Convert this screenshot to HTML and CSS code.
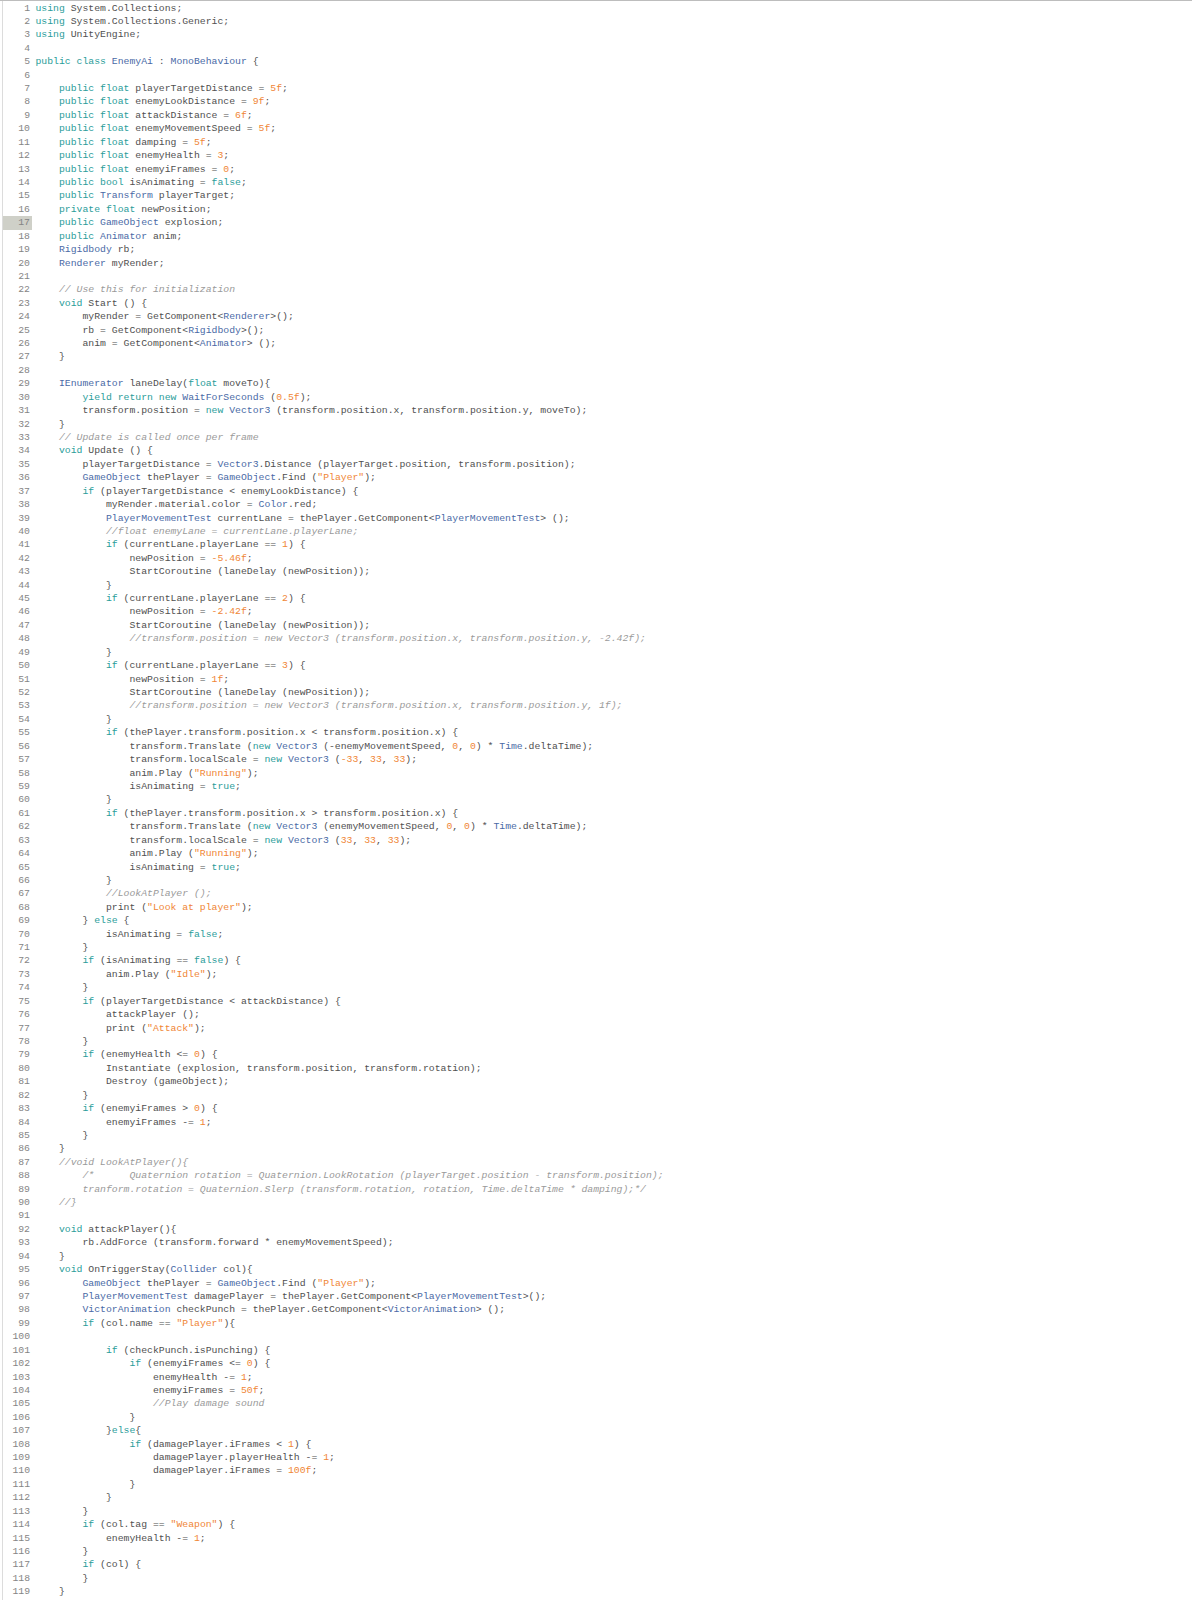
FILE: index.html
```html
<!DOCTYPE html>
<html lang="en">
<head>
<meta charset="utf-8">
<title>EnemyAi.cs</title>
<link rel="stylesheet" href="styles.css">
</head>
<body>
<main class="editor">
<div class="line"><span class="num">1</span><code><span class="k">using</span> System.Collections;</code></div>
<div class="line"><span class="num">2</span><code><span class="k">using</span> System.Collections.Generic;</code></div>
<div class="line"><span class="num">3</span><code><span class="k">using</span> UnityEngine;</code></div>
<div class="line"><span class="num">4</span><code></code></div>
<div class="line"><span class="num">5</span><code><span class="k">public class</span> <span class="t">EnemyAi</span> : <span class="t">MonoBehaviour</span> {</code></div>
<div class="line"><span class="num">6</span><code></code></div>
<div class="line"><span class="num">7</span><code>    <span class="k">public float</span> playerTargetDistance = <span class="n">5f</span>;</code></div>
<div class="line"><span class="num">8</span><code>    <span class="k">public float</span> enemyLookDistance = <span class="n">9f</span>;</code></div>
<div class="line"><span class="num">9</span><code>    <span class="k">public float</span> attackDistance = <span class="n">6f</span>;</code></div>
<div class="line"><span class="num">10</span><code>    <span class="k">public float</span> enemyMovementSpeed = <span class="n">5f</span>;</code></div>
<div class="line"><span class="num">11</span><code>    <span class="k">public float</span> damping = <span class="n">5f</span>;</code></div>
<div class="line"><span class="num">12</span><code>    <span class="k">public float</span> enemyHealth = <span class="n">3</span>;</code></div>
<div class="line"><span class="num">13</span><code>    <span class="k">public float</span> enemyiFrames = <span class="n">0</span>;</code></div>
<div class="line"><span class="num">14</span><code>    <span class="k">public bool</span> isAnimating = <span class="k">false</span>;</code></div>
<div class="line"><span class="num">15</span><code>    <span class="k">public</span> <span class="t">Transform</span> playerTarget;</code></div>
<div class="line"><span class="num">16</span><code>    <span class="k">private float</span> newPosition;</code></div>
<div class="line current"><span class="num">17</span><code>    <span class="k">public</span> <span class="t">GameObject</span> explosion;</code></div>
<div class="line"><span class="num">18</span><code>    <span class="k">public</span> <span class="t">Animator</span> anim;</code></div>
<div class="line"><span class="num">19</span><code>    <span class="t">Rigidbody</span> rb;</code></div>
<div class="line"><span class="num">20</span><code>    <span class="t">Renderer</span> myRender;</code></div>
<div class="line"><span class="num">21</span><code></code></div>
<div class="line"><span class="num">22</span><code>    <span class="c">// Use this for initialization</span></code></div>
<div class="line"><span class="num">23</span><code>    <span class="k">void</span> Start () {</code></div>
<div class="line"><span class="num">24</span><code>        myRender = GetComponent&lt;<span class="t">Renderer</span>&gt;();</code></div>
<div class="line"><span class="num">25</span><code>        rb = GetComponent&lt;<span class="t">Rigidbody</span>&gt;();</code></div>
<div class="line"><span class="num">26</span><code>        anim = GetComponent&lt;<span class="t">Animator</span>&gt; ();</code></div>
<div class="line"><span class="num">27</span><code>    }</code></div>
<div class="line"><span class="num">28</span><code></code></div>
<div class="line"><span class="num">29</span><code>    <span class="t">IEnumerator</span> laneDelay(<span class="k">float</span> moveTo){</code></div>
<div class="line"><span class="num">30</span><code>        <span class="k">yield return new</span> <span class="t">WaitForSeconds</span> (<span class="n">0.5f</span>);</code></div>
<div class="line"><span class="num">31</span><code>        transform.position = <span class="k">new</span> <span class="t">Vector3</span> (transform.position.x, transform.position.y, moveTo);</code></div>
<div class="line"><span class="num">32</span><code>    }</code></div>
<div class="line"><span class="num">33</span><code>    <span class="c">// Update is called once per frame</span></code></div>
<div class="line"><span class="num">34</span><code>    <span class="k">void</span> Update () {</code></div>
<div class="line"><span class="num">35</span><code>        playerTargetDistance = <span class="t">Vector3</span>.Distance (playerTarget.position, transform.position);</code></div>
<div class="line"><span class="num">36</span><code>        <span class="t">GameObject</span> thePlayer = <span class="t">GameObject</span>.Find (<span class="n">"Player"</span>);</code></div>
<div class="line"><span class="num">37</span><code>        <span class="k">if</span> (playerTargetDistance &lt; enemyLookDistance) {</code></div>
<div class="line"><span class="num">38</span><code>            myRender.material.color = <span class="t">Color</span>.red;</code></div>
<div class="line"><span class="num">39</span><code>            <span class="t">PlayerMovementTest</span> currentLane = thePlayer.GetComponent&lt;<span class="t">PlayerMovementTest</span>&gt; ();</code></div>
<div class="line"><span class="num">40</span><code>            <span class="c">//float enemyLane = currentLane.playerLane;</span></code></div>
<div class="line"><span class="num">41</span><code>            <span class="k">if</span> (currentLane.playerLane == <span class="n">1</span>) {</code></div>
<div class="line"><span class="num">42</span><code>                newPosition = <span class="n">-5.46f</span>;</code></div>
<div class="line"><span class="num">43</span><code>                StartCoroutine (laneDelay (newPosition));</code></div>
<div class="line"><span class="num">44</span><code>            }</code></div>
<div class="line"><span class="num">45</span><code>            <span class="k">if</span> (currentLane.playerLane == <span class="n">2</span>) {</code></div>
<div class="line"><span class="num">46</span><code>                newPosition = <span class="n">-2.42f</span>;</code></div>
<div class="line"><span class="num">47</span><code>                StartCoroutine (laneDelay (newPosition));</code></div>
<div class="line"><span class="num">48</span><code>                <span class="c">//transform.position = new Vector3 (transform.position.x, transform.position.y, -2.42f);</span></code></div>
<div class="line"><span class="num">49</span><code>            }</code></div>
<div class="line"><span class="num">50</span><code>            <span class="k">if</span> (currentLane.playerLane == <span class="n">3</span>) {</code></div>
<div class="line"><span class="num">51</span><code>                newPosition = <span class="n">1f</span>;</code></div>
<div class="line"><span class="num">52</span><code>                StartCoroutine (laneDelay (newPosition));</code></div>
<div class="line"><span class="num">53</span><code>                <span class="c">//transform.position = new Vector3 (transform.position.x, transform.position.y, 1f);</span></code></div>
<div class="line"><span class="num">54</span><code>            }</code></div>
<div class="line"><span class="num">55</span><code>            <span class="k">if</span> (thePlayer.transform.position.x &lt; transform.position.x) {</code></div>
<div class="line"><span class="num">56</span><code>                transform.Translate (<span class="k">new</span> <span class="t">Vector3</span> (-enemyMovementSpeed, <span class="n">0</span>, <span class="n">0</span>) * <span class="t">Time</span>.deltaTime);</code></div>
<div class="line"><span class="num">57</span><code>                transform.localScale = <span class="k">new</span> <span class="t">Vector3</span> (<span class="n">-33</span>, <span class="n">33</span>, <span class="n">33</span>);</code></div>
<div class="line"><span class="num">58</span><code>                anim.Play (<span class="n">"Running"</span>);</code></div>
<div class="line"><span class="num">59</span><code>                isAnimating = <span class="k">true</span>;</code></div>
<div class="line"><span class="num">60</span><code>            }</code></div>
<div class="line"><span class="num">61</span><code>            <span class="k">if</span> (thePlayer.transform.position.x &gt; transform.position.x) {</code></div>
<div class="line"><span class="num">62</span><code>                transform.Translate (<span class="k">new</span> <span class="t">Vector3</span> (enemyMovementSpeed, <span class="n">0</span>, <span class="n">0</span>) * <span class="t">Time</span>.deltaTime);</code></div>
<div class="line"><span class="num">63</span><code>                transform.localScale = <span class="k">new</span> <span class="t">Vector3</span> (<span class="n">33</span>, <span class="n">33</span>, <span class="n">33</span>);</code></div>
<div class="line"><span class="num">64</span><code>                anim.Play (<span class="n">"Running"</span>);</code></div>
<div class="line"><span class="num">65</span><code>                isAnimating = <span class="k">true</span>;</code></div>
<div class="line"><span class="num">66</span><code>            }</code></div>
<div class="line"><span class="num">67</span><code>            <span class="c">//LookAtPlayer ();</span></code></div>
<div class="line"><span class="num">68</span><code>            print (<span class="n">"Look at player"</span>);</code></div>
<div class="line"><span class="num">69</span><code>        } <span class="k">else</span> {</code></div>
<div class="line"><span class="num">70</span><code>            isAnimating = <span class="k">false</span>;</code></div>
<div class="line"><span class="num">71</span><code>        }</code></div>
<div class="line"><span class="num">72</span><code>        <span class="k">if</span> (isAnimating == <span class="k">false</span>) {</code></div>
<div class="line"><span class="num">73</span><code>            anim.Play (<span class="n">"Idle"</span>);</code></div>
<div class="line"><span class="num">74</span><code>        }</code></div>
<div class="line"><span class="num">75</span><code>        <span class="k">if</span> (playerTargetDistance &lt; attackDistance) {</code></div>
<div class="line"><span class="num">76</span><code>            attackPlayer ();</code></div>
<div class="line"><span class="num">77</span><code>            print (<span class="n">"Attack"</span>);</code></div>
<div class="line"><span class="num">78</span><code>        }</code></div>
<div class="line"><span class="num">79</span><code>        <span class="k">if</span> (enemyHealth &lt;= <span class="n">0</span>) {</code></div>
<div class="line"><span class="num">80</span><code>            Instantiate (explosion, transform.position, transform.rotation);</code></div>
<div class="line"><span class="num">81</span><code>            Destroy (gameObject);</code></div>
<div class="line"><span class="num">82</span><code>        }</code></div>
<div class="line"><span class="num">83</span><code>        <span class="k">if</span> (enemyiFrames &gt; <span class="n">0</span>) {</code></div>
<div class="line"><span class="num">84</span><code>            enemyiFrames -= <span class="n">1</span>;</code></div>
<div class="line"><span class="num">85</span><code>        }</code></div>
<div class="line"><span class="num">86</span><code>    }</code></div>
<div class="line"><span class="num">87</span><code>    <span class="c">//void LookAtPlayer(){</span></code></div>
<div class="line"><span class="num">88</span><code>        <span class="c">/*      Quaternion rotation = Quaternion.LookRotation (playerTarget.position - transform.position);</span></code></div>
<div class="line"><span class="num">89</span><code>        <span class="c">tranform.rotation = Quaternion.Slerp (transform.rotation, rotation, Time.deltaTime * damping);*/</span></code></div>
<div class="line"><span class="num">90</span><code>    <span class="c">//}</span></code></div>
<div class="line"><span class="num">91</span><code></code></div>
<div class="line"><span class="num">92</span><code>    <span class="k">void</span> attackPlayer(){</code></div>
<div class="line"><span class="num">93</span><code>        rb.AddForce (transform.forward * enemyMovementSpeed);</code></div>
<div class="line"><span class="num">94</span><code>    }</code></div>
<div class="line"><span class="num">95</span><code>    <span class="k">void</span> OnTriggerStay(<span class="t">Collider</span> col){</code></div>
<div class="line"><span class="num">96</span><code>        <span class="t">GameObject</span> thePlayer = <span class="t">GameObject</span>.Find (<span class="n">"Player"</span>);</code></div>
<div class="line"><span class="num">97</span><code>        <span class="t">PlayerMovementTest</span> damagePlayer = thePlayer.GetComponent&lt;<span class="t">PlayerMovementTest</span>&gt;();</code></div>
<div class="line"><span class="num">98</span><code>        <span class="t">VictorAnimation</span> checkPunch = thePlayer.GetComponent&lt;<span class="t">VictorAnimation</span>&gt; ();</code></div>
<div class="line"><span class="num">99</span><code>        <span class="k">if</span> (col.name == <span class="n">"Player"</span>){</code></div>
<div class="line"><span class="num">100</span><code></code></div>
<div class="line"><span class="num">101</span><code>            <span class="k">if</span> (checkPunch.isPunching) {</code></div>
<div class="line"><span class="num">102</span><code>                <span class="k">if</span> (enemyiFrames &lt;= <span class="n">0</span>) {</code></div>
<div class="line"><span class="num">103</span><code>                    enemyHealth -= <span class="n">1</span>;</code></div>
<div class="line"><span class="num">104</span><code>                    enemyiFrames = <span class="n">50f</span>;</code></div>
<div class="line"><span class="num">105</span><code>                    <span class="c">//Play damage sound</span></code></div>
<div class="line"><span class="num">106</span><code>                }</code></div>
<div class="line"><span class="num">107</span><code>            }<span class="k">else</span>{</code></div>
<div class="line"><span class="num">108</span><code>                <span class="k">if</span> (damagePlayer.iFrames &lt; <span class="n">1</span>) {</code></div>
<div class="line"><span class="num">109</span><code>                    damagePlayer.playerHealth -= <span class="n">1</span>;</code></div>
<div class="line"><span class="num">110</span><code>                    damagePlayer.iFrames = <span class="n">100f</span>;</code></div>
<div class="line"><span class="num">111</span><code>                }</code></div>
<div class="line"><span class="num">112</span><code>            }</code></div>
<div class="line"><span class="num">113</span><code>        }</code></div>
<div class="line"><span class="num">114</span><code>        <span class="k">if</span> (col.tag == <span class="n">"Weapon"</span>) {</code></div>
<div class="line"><span class="num">115</span><code>            enemyHealth -= <span class="n">1</span>;</code></div>
<div class="line"><span class="num">116</span><code>        }</code></div>
<div class="line"><span class="num">117</span><code>        <span class="k">if</span> (col) {</code></div>
<div class="line"><span class="num">118</span><code>        }</code></div>
<div class="line"><span class="num">119</span><code>    }</code></div>
</main>
</body>
</html>
```
FILE: styles.css
```css
html, body {
  margin: 0;
  padding: 0;
  background: #fff;
}

body {
  border-top: 1px solid #bdbdbd;
}

.editor {
  margin-left: 2px;
  border-left: 1px solid #dcdcdc;
  padding-top: 0.5px;
  height: 1598.5px;
  overflow: hidden;
  font-family: "Liberation Mono", "DejaVu Sans Mono", monospace;
  font-size: 9.79px;
  color: #505050;
}

.line {
  display: grid;
  grid-template-columns: 29px 1fr;
  column-gap: 3.5px;
  height: 13.43px;
  line-height: 13.43px;
}

.num {
  padding-right: 2px;
  text-align: right;
  color: #858585;
}

.line code {
  font: inherit;
  white-space: pre;
}

.current .num {
  background: #cfd0c8;
}

.k { color: #2a9d9a; }
.t { color: #4a6aa6; }
.n { color: #f08636; }
.c { color: #9a9a9a; font-style: italic; }
```
